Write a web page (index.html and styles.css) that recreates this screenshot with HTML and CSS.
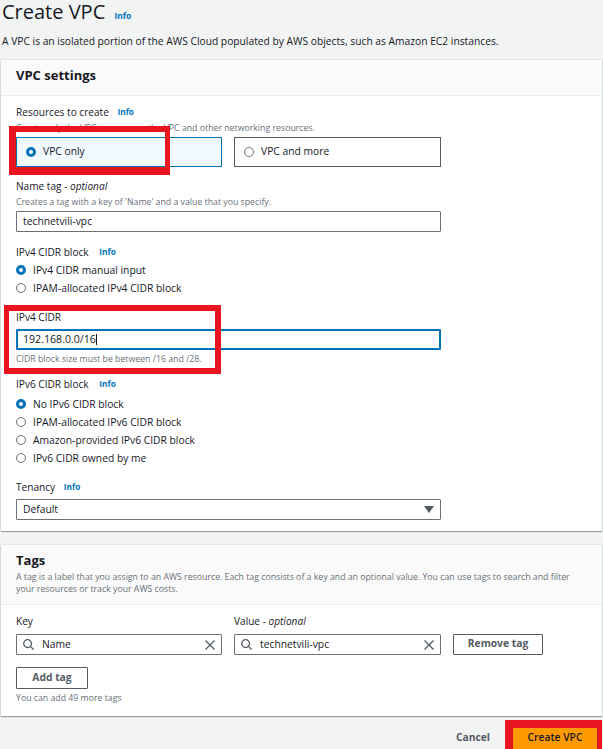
FILE: index.html
```html
<!DOCTYPE html>
<html lang="en">
<head>
<meta charset="utf-8">
<title>Create VPC</title>
<link rel="stylesheet" href="styles.css">
</head>
<body>
<div class="page">
  <header class="page-head">
    <h1>Create VPC <a class="info info-title">Info</a></h1>
    <p>A VPC is an isolated portion of the AWS Cloud populated by AWS objects, such as Amazon EC2 instances.</p>
  </header>

  <section class="card card-settings">
    <div class="card-head"><h2>VPC settings</h2></div>
    <div class="card-body">
      <div class="label label-first">Resources to create <a class="info">Info</a></div>
      <div class="hint hint-res">Create only the VPC resource or the VPC and other networking resources.</div>
      <div class="tiles">
        <div class="tile tile-on"><span class="radio radio-on"></span>VPC only</div>
        <div class="tile tile-off"><span class="radio"></span>VPC and more</div>
      </div>

      <div class="label label-name">Name tag - <em>optional</em></div>
      <div class="hint hint-name">Creates a tag with a key of 'Name' and a value that you specify.</div>
      <div class="input input-name">technetvili-vpc</div>

      <div class="label label-v4">IPv4 CIDR block <a class="info info-wide">Info</a></div>
      <div class="radios radios-v4">
        <div class="radio-row"><span class="radio radio-on"></span>IPv4 CIDR manual input</div>
        <div class="radio-row"><span class="radio"></span>IPAM-allocated IPv4 CIDR block</div>
      </div>

      <div class="label label-cidr">IPv4 CIDR</div>
      <div class="input input-focus">192.168.0.0/16<span class="caret"></span></div>
      <div class="hint hint-after">CIDR block size must be between /16 and /28.</div>

      <div class="label label-v6">IPv6 CIDR block <a class="info info-wide">Info</a></div>
      <div class="radios radios-v6">
        <div class="radio-row"><span class="radio radio-on"></span>No IPv6 CIDR block</div>
        <div class="radio-row"><span class="radio"></span>IPAM-allocated IPv6 CIDR block</div>
        <div class="radio-row"><span class="radio"></span>Amazon-provided IPv6 CIDR block</div>
        <div class="radio-row"><span class="radio"></span>IPv6 CIDR owned by me</div>
      </div>

      <div class="label label-ten">Tenancy <a class="info">Info</a></div>
      <div class="input input-select">Default
        <svg class="caret-down" width="10" height="7" viewBox="0 0 10 7"><path d="M0 0h10L5 7z"/></svg>
      </div>
    </div>
  </section>

  <section class="card card-tags">
    <div class="card-head tags-head">
      <h2>Tags</h2>
      <p>A tag is a label that you assign to an AWS resource. Each tag consists of a key and an optional value. You can use tags to search and filter your resources or track your AWS costs.</p>
    </div>
    <div class="tags-body">
      <div class="tag-grid">
        <div class="tag-col">
          <div class="label label-tag">Key</div>
          <div class="input input-search">
            <svg class="icon" width="11" height="11" viewBox="0 0 11 11"><circle cx="4.6" cy="4.6" r="3.9"/><path d="M7.4 7.4 10.6 10.6"/></svg>
            <span class="grow">Name</span>
            <svg class="icon" width="10" height="10" viewBox="0 0 10 10"><path d="M.5.5l9 9M9.5.5l-9 9"/></svg>
          </div>
        </div>
        <div class="tag-col">
          <div class="label label-tag">Value - <em>optional</em></div>
          <div class="input input-search">
            <svg class="icon" width="11" height="11" viewBox="0 0 11 11"><circle cx="4.6" cy="4.6" r="3.9"/><path d="M7.4 7.4 10.6 10.6"/></svg>
            <span class="grow">technetvili-vpc</span>
            <svg class="icon" width="10" height="10" viewBox="0 0 10 10"><path d="M.5.5l9 9M9.5.5l-9 9"/></svg>
          </div>
        </div>
        <div class="btn btn-remove">Remove tag</div>
      </div>
      <div class="btn btn-add">Add tag</div>
      <div class="hint hint-more">You can add 49 more tags</div>
    </div>
  </section>

  <footer class="actions">
    <span class="cancel">Cancel</span>
    <span class="btn-primary">Create VPC</span>
  </footer>

  <div class="mark mark-tile"></div>
  <div class="mark mark-cidr"></div>
  <div class="mark mark-create"></div>
</div>
</body>
</html>
```

FILE: styles.css
```css
* { box-sizing: border-box; }
html, body { margin: 0; padding: 0; }
body {
  font-family: "Open Sans", "Noto Sans", "Liberation Sans", sans-serif;
  color: #16191f;
  background: #f2f3f3;
  width: 603px;
  height: 749px;
  overflow: hidden;
}
.page { position: relative; width: 603px; height: 749px; overflow: hidden; }

.page-head { height: 60px; padding: 0 2px; }
.page-head h1 { margin: 0; height: 33px; font-size: 20px; line-height: 23px; font-weight: 400; }
.page-head p { margin: 0; font-size: 10.25px; line-height: 16px; color: #16191f; }

.info { color: #0073bb; font-size: 8.3px; font-weight: 700; margin-left: 6px; vertical-align: 1px; }
.info-wide { margin-left: 8px; }
.info-title { font-size: 8.5px; margin-left: 4px; vertical-align: 0; }

.card {
  margin-left: 1px;
  width: 601px;
  background: #fff;
  box-shadow: 0 1px 1px rgba(0,28,36,.35), 0 0 1px rgba(0,28,36,.3);
}
.card-settings { height: 471px; }
.card-head {
  height: 36px;
  padding: 6px 15px 0;
  background: #fafafa;
  border-bottom: 1px solid #eaeded;
}
.card-head h2 { margin: 0; font-size: 13px; line-height: 18px; font-weight: 700; }
.card-body { padding: 0 0 0 15px; width: 440px; }

.label { font-size: 10.1px; line-height: 14px; color: #16191f; }
.label em { font-style: italic; }
.label-first { margin-top: 9px; }
.hint { font-size: 8.75px; line-height: 12px; color: #687078; }
.hint-res { height: 15px; margin-top: 3px; }
.tiles { display: grid; grid-template-columns: 206px 207px; gap: 12px; }
.tile {
  height: 30px;
  border: 1px solid #545b64;
  display: flex;
  align-items: center;
  padding: 0 0 2px 9px;
  font-size: 10.3px;
}
.tile .radio { margin-top: 2px; }
.tile-on { background: #f1faff; border-color: #0073bb; }
.radio {
  width: 10px;
  height: 10px;
  border-radius: 50%;
  border: 1px solid #687078;
  background: #fff;
  margin-right: 7px;
  flex: none;
}
.radio-on { border: 3px solid #0073bb; }

.label-name { margin-top: 12px; }
.hint-name { margin-top: 3px; }
.input {
  height: 21px;
  border: 1px solid #687078;
  border-radius: 1px;
  background: #fff;
  font-size: 10.3px;
  line-height: 19px;
  padding-left: 6px;
  color: #16191f;
}
.input-name { margin-top: 3px; }
.label-v4 { margin-top: 13px; }
.radios-v4 { margin-top: 2px; }
.radios-v6 { margin-top: 4px; }
.radio-row { height: 18px; display: flex; align-items: center; font-size: 10.3px; }
.label-cidr { margin-top: 13px; }
.input-focus { margin-top: 5px; border: 2px solid #0073bb; padding-left: 5px; line-height: 17px; font-size: 10.6px; }
.caret { display: inline-block; width: 1px; height: 11px; background: #16191f; vertical-align: -2px; }
.hint-after { margin-top: 3px; }
.label-v6 { margin-top: 12px; }
.label-ten { margin-top: 13px; }
.input-select { margin-top: 5px; display: flex; justify-content: space-between; align-items: center; padding: 0 6px 1px; }
.caret-down { fill: #545b64; }

.card-tags { margin-top: 14px; height: 171px; }
.tags-head { height: 60px; padding-top: 8px; }
.tags-head h2 { line-height: 14px; }
.tags-head p { margin: 4px 0 0; width: 565px; font-size: 8.75px; line-height: 12px; color: #687078; }
.tags-body { padding: 9px 15px 0; }
.tag-grid { display: grid; grid-template-columns: 206px 207px 90px; gap: 12px; align-items: end; }
.label-tag { height: 20px; line-height: 14px; }
.input-search { display: flex; align-items: center; gap: 8px; padding: 0 6px; }
.grow { flex: 1; }
.icon { fill: none; stroke: #545b64; stroke-width: 1.3; flex: none; }
.btn {
  border: 1px solid #545b64;
  border-radius: 1px;
  background: #fff;
  color: #545b64;
  font-size: 10.3px;
  font-weight: 700;
  text-align: center;
}
.btn-remove { height: 21px; line-height: 16px; }
.btn-add { width: 72px; height: 22px; line-height: 19px; margin-top: 12px; }
.hint-more { margin-top: 3px; }

.actions {
  display: flex;
  justify-content: flex-end;
  align-items: flex-start;
  height: 33px;
  padding-top: 12px;
  font-size: 10.3px;
  font-weight: 700;
  line-height: 18px;
}
.cancel { color: #545b64; margin-right: 23px; }
.btn-primary {
  width: 84px;
  height: 21px;
  margin-right: 6px;
  background: #ff9900;
  color: #16191f;
  text-align: center;
  font-weight: 600;
}

.mark { position: absolute; border-style: solid; border-color: #e8141f; }
.mark-tile { left: 9px; top: 126px; width: 161px; height: 49px; border-width: 6px 5px 8px 7px; }
.mark-cidr { left: 4px; top: 305px; width: 217px; height: 69px; border-width: 6px 6px 6px 5px; }
.mark-create { left: 505px; top: 720px; width: 97px; height: 32px; border-width: 8px 5px 0 8px; }
```
